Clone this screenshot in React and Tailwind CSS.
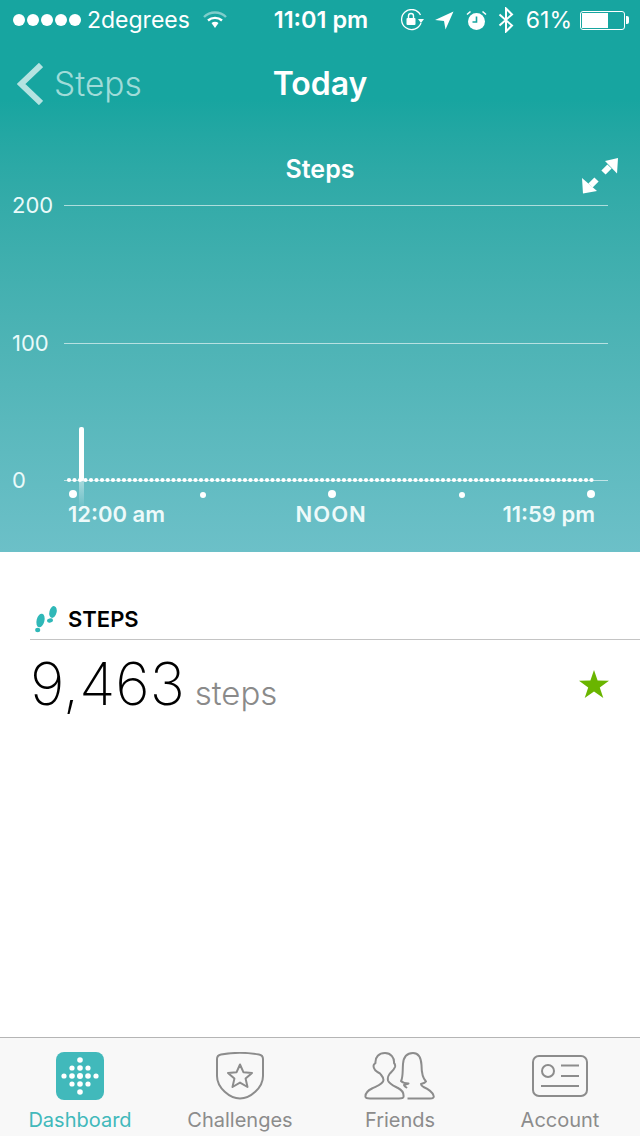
import React from "react";

const plotDots = Array.from({ length: 96 }, (_, i) => 69 + i * 5.5);
const logoDots = [
  [24, 8, 2.8],
  [16, 16, 2.6],
  [24, 16, 2.8],
  [32, 16, 2.6],
  [8, 24, 2.6],
  [16, 24, 2.8],
  [24, 24, 3],
  [32, 24, 2.8],
  [40, 24, 2.6],
  [16, 32, 2.6],
  [24, 32, 2.8],
  [32, 32, 2.6],
  [24, 40, 2.8],
];

function WifiIcon() {
  return (
    <svg width="24" height="18" viewBox="0 0 24 18" className="ml-[13px]">
      <path d="M1 6 C7 0 17 0 23 6" fill="none" stroke="#fff" strokeOpacity="0.45" strokeWidth="2.4" />
      <path d="M5 9.5 C9 6 15 6 19 9.5" fill="none" stroke="#fff" strokeWidth="2.4" />
      <path d="M8.5 12 C10.5 10.4 13.5 10.4 15.5 12 L12 17 Z" fill="#fff" />
    </svg>
  );
}

function StatusIcons() {
  return (
    <div className="flex items-center">
      <svg width="24" height="22" viewBox="0 0 24 22">
        <path d="M20.5 6 A10 10 0 1 0 21 14" fill="none" stroke="#fff" strokeWidth="1.3" />
        <path d="M18 10 L24 10 L21 14 Z" fill="#fff" />
        <rect x="6.5" y="9" width="9" height="7" rx="1" fill="#fff" />
        <path d="M8.5 9 V7 a2.5 2.5 0 0 1 5 0 V9" fill="none" stroke="#fff" strokeWidth="1.4" />
      </svg>
      <svg width="19" height="19" viewBox="0 0 19 19" className="ml-[11px]">
        <path d="M0 9 L18.5 0.5 L10.5 18.5 L9 10 Z" fill="#fff" />
      </svg>
      <svg width="21" height="21" viewBox="0 0 21 21" className="ml-[12px]">
        <circle cx="10.5" cy="11.5" r="8.5" fill="#fff" />
        <path d="M10.5 6.5 V12 H6.5" fill="none" stroke="#17a5a0" strokeWidth="1.6" />
        <path d="M1 4.5 L4.5 1.5 M20 4.5 L16.5 1.5" stroke="#fff" strokeWidth="1.6" />
      </svg>
      <svg width="16" height="26" viewBox="0 0 16 26" className="ml-[11px]">
        <path d="M1.5 7.5 L14 18.5 L8 24.5 V1.5 L14 7.5 L1.5 18.5" fill="none" stroke="#fff" strokeWidth="2" />
      </svg>
    </div>
  );
}

function BatteryIcon() {
  return (
    <div className="ml-[8px] flex items-center">
      <div className="h-[19px] w-[45px] rounded-[3px] border border-white p-[1px]">
        <div className="h-full w-[26px] bg-white" />
      </div>
      <div className="ml-[1px] h-[8px] w-[3px] rounded-r-[2px] bg-white" />
    </div>
  );
}

function ExpandIcon() {
  return (
    <svg width="36" height="36" viewBox="0 0 36 36" className="absolute right-[22px] top-[5px]">
      <path d="M23 3 L36 0 L35 15.5 Z" fill="#fff" />
      <path d="M27.5 8.5 L21.5 14.5" stroke="#fff" strokeWidth="6" />
      <path d="M0 20 L1 35.5 L15 33 Z" fill="#fff" />
      <path d="M8.5 27.5 L14.5 21.5" stroke="#fff" strokeWidth="6" />
    </svg>
  );
}

function ChartMarks() {
  return (
    <svg width="640" height="110" viewBox="0 0 640 110" className="absolute left-0 top-[427px]">
      <defs>
        <linearGradient id="barFade" x1="0" y1="0" x2="0" y2="1">
          <stop offset="0" stopColor="#fff" stopOpacity="0.45" />
          <stop offset="1" stopColor="#fff" stopOpacity="0" />
        </linearGradient>
      </defs>
      <rect x="79" y="53" width="5" height="30" fill="url(#barFade)" />
      <rect x="79" y="0" width="5" height="54" rx="2" fill="#fff" />
      {plotDots.map((x) => (
        <circle key={x} cx={x} cy="53" r="2.1" fill="#fff" />
      ))}
      <circle cx="73" cy="67" r="4" fill="#fff" />
      <circle cx="203" cy="68" r="3" fill="#fff" />
      <circle cx="332" cy="67" r="4" fill="#fff" />
      <circle cx="462" cy="68" r="3" fill="#fff" />
      <circle cx="591" cy="67" r="4" fill="#fff" />
    </svg>
  );
}

function ChartRow({ label, className }) {
  return (
    <div className={`flex h-[20px] items-center ${className}`}>
      <span className="w-[64px] pl-[12px] text-[22px] leading-[22px] text-[#eafafa]">{label}</span>
      <div className="mr-[32px] h-px flex-1 bg-white/60" />
    </div>
  );
}

function Footprints() {
  return (
    <svg width="26" height="30" viewBox="0 0 26 30" className="ml-[33px] mr-[9px]">
      <ellipse cx="20" cy="8" rx="3.6" ry="6" transform="rotate(14 20 8)" fill="#2fb8b8" />
      <ellipse cx="17" cy="16.5" rx="3" ry="2.1" transform="rotate(-15 17 16.5)" fill="#2fb8b8" />
      <ellipse cx="7.5" cy="16.5" rx="3.9" ry="7" transform="rotate(14 7.5 16.5)" fill="#2fb8b8" />
      <ellipse cx="4.7" cy="26" rx="2.6" ry="2.2" fill="#2fb8b8" />
    </svg>
  );
}

function DashboardIcon() {
  return (
    <div className="h-[48px] w-[48px] rounded-[8px] bg-[#41b9bb]">
      <svg width="48" height="48" viewBox="0 0 48 48">
        {logoDots.map(([cx, cy, r]) => (
          <circle key={`${cx}-${cy}`} cx={cx} cy={cy} r={r} fill="#fff" />
        ))}
      </svg>
    </div>
  );
}

function ChallengesIcon() {
  return (
    <svg width="48" height="48" viewBox="0 0 48 48" fill="none" stroke="#8c8c8c" strokeWidth="2">
      <path d="M1 7 C1 4 3 3 5 2.6 C17 0.4 31 0.4 43 2.6 C45 3 47 4 47 7 V24 C47 36 34 46.5 24 46.5 C14 46.5 1 36 1 24 Z" />
      <path d="M24 12.5 L27.4 20.2 L36 21 L29.6 26.6 L31.5 35 L24 30.6 L16.5 35 L18.4 26.6 L12 21 L20.6 20.2 Z" strokeLinejoin="round" />
    </svg>
  );
}

function FriendsIcon() {
  return (
    <svg width="72" height="48" viewBox="0 0 72 48" fill="none" stroke="#8c8c8c" strokeWidth="2" strokeLinejoin="round">
      <path d="M1.5 45 C1 41 3 39 8 36.5 C13 34 19.5 32 19.5 28 C19.5 25 17.5 23.5 16 21.5 C13 20 9.5 17 9.5 14 C9.5 12.5 10.5 12 11.5 11 C11 5 15 1 21 1 C27 1 30.5 6 30 11 C31 12 31.5 13 31 15 C30 18 27 20 25.5 22 C24 24 23.5 26 24 28.5 C25 32 30 34 34 36 C38 38 40 41 39.5 45 C39 46.5 37 46.5 35 46.5 H6 C3.5 46.5 2 46.5 1.5 45 Z" />
      <path d="M43.5 46.5 H66 C69 46.5 70.5 45.5 69.5 43.5 C68 39 63 36.5 59.5 35 C58 34 57 33 57 32 C59 31.5 61 31 62 29.5 C58.5 26 57.5 20 57.5 13 C57 5 54 1 49 1 C43 1 39.5 5 39 12 C38.5 20 39 26 37 29 C39 31 42 31.5 44.5 31.5 L40 33 C41 35 42 35 43 36" />
    </svg>
  );
}

function AccountIcon() {
  return (
    <svg width="56" height="42" viewBox="0 0 56 42" fill="none" stroke="#8c8c8c" strokeWidth="2">
      <rect x="1" y="1" width="54" height="40" rx="6" />
      <circle cx="16" cy="16" r="6" />
      <path d="M29 10.5 H47 M29 21 H47 M9 31 H47" />
    </svg>
  );
}

function Tab({ label, active, children }) {
  return (
    <div className="flex flex-col items-center">
      <div className="flex h-[48px] items-center">{children}</div>
      <span className={`mt-[7px] text-[20px] leading-[26px] ${active ? "text-[#41b9bb]" : "text-[#8c8c8c]"}`}>
        {label}
      </span>
    </div>
  );
}

export default function App() {
  return (
    <div className="flex h-[1136px] w-[640px] flex-col overflow-hidden bg-white font-['Inter',sans-serif]">
      {/* teal header with chart */}
      <div className="relative h-[552px] bg-gradient-to-b from-[#17a5a0] from-[18%] to-[#6cc0c8] text-white">
        <div className="flex h-[40px] items-center">
          <div className="flex flex-1 items-center pl-[13px]">
            <div className="flex gap-[2px]">
              {[0, 1, 2, 3, 4].map((i) => (
                <div key={i} className="h-[12px] w-[12px] rounded-full bg-white" />
              ))}
            </div>
            <span className="ml-[6px] text-[23px] leading-[28px]">2degrees</span>
            <WifiIcon />
          </div>
          <span className="text-[23.5px] font-semibold leading-[28px]">11:01 pm</span>
          <div className="flex flex-1 items-center justify-end pr-[11px]">
            <StatusIcons />
            <span className="ml-[12px] text-[23px] leading-[28px]">61%</span>
            <BatteryIcon />
          </div>
        </div>

        <div className="flex h-[88px] items-center">
          <div className="flex flex-1 items-center pl-[17px]">
            <svg width="26" height="42" viewBox="0 0 26 42" fill="none" stroke="#b5e3e1" strokeWidth="6">
              <path d="M24 2 L4 21 L24 40" />
            </svg>
            <span className="ml-[11px] text-[33.5px] font-light leading-[40px] text-[#a0dcd9]">Steps</span>
          </div>
          <span className="text-[32px] font-semibold leading-[40px]">Today</span>
          <div className="flex-1 pl-[17px]" />
        </div>

        <div className="relative mt-[25px]">
          <div className="text-center text-[25px] font-semibold leading-[32px]">
            Steps
          </div>
          <ExpandIcon />
        </div>

        <ChartRow label="200" className="mt-[10px]" />
        <ChartRow label="100" className="mt-[118px]" />
        <ChartRow label="0" className="mt-[117px]" />

        <div className="mt-[10px] flex justify-between pl-[68px] pr-[45px] text-[22px] font-semibold leading-[28px] text-[#eefafa]">
          <span>12:00 am</span>
          <span className="mr-[5px] tracking-[1px]">NOON</span>
          <span>11:59 pm</span>
        </div>

        <ChartMarks />
      </div>

      {/* steps summary */}
      <div className="flex-1">
        <div className="mt-[52px] flex h-[36px] items-center border-b border-[#c4c4c4] pb-[6px] ml-[30px]">
          <div className="ml-[-30px] flex items-center">
            <Footprints />
            <span className="text-[22px] font-semibold leading-[28px] text-black">STEPS</span>
          </div>
        </div>
        <div className="flex items-baseline pl-[30px] pr-[31px]">
          <span className="text-[59px] font-extralight leading-[88px] text-black">9,463</span>
          <span className="ml-[10px] flex-1 text-[33px] font-light text-[#8a8a8a]">steps</span>
          <svg width="30" height="28" viewBox="0 0 30 28" className="self-center">
            <path d="M15 0 L18.6 10.6 L30 10.8 L20.8 17.5 L24.3 28 L15 21.6 L5.7 28 L9.2 17.5 L0 10.8 L11.4 10.6 Z" fill="#6ab500" />
          </svg>
        </div>
      </div>

      {/* tab bar */}
      <div className="grid h-[99px] grid-cols-4 border-t border-[#b5b5b5] bg-[#f8f8f8] pt-[14px]">
        <Tab label="Dashboard" active>
          <DashboardIcon />
        </Tab>
        <Tab label="Challenges">
          <ChallengesIcon />
        </Tab>
        <Tab label="Friends">
          <FriendsIcon />
        </Tab>
        <Tab label="Account">
          <AccountIcon />
        </Tab>
      </div>
    </div>
  );
}
